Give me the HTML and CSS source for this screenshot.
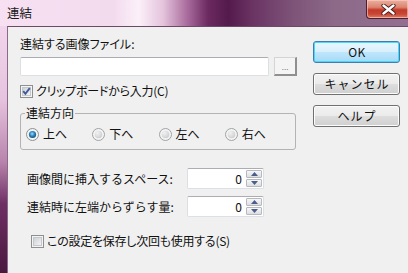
FILE: index.html
```html
<!DOCTYPE html>
<html lang="ja">
<head>
<meta charset="utf-8">
<title>連結</title>
<link rel="stylesheet" href="styles.css">
</head>
<body>
<div class="window">
  <div class="titlebar">
    <span class="title">連結</span>
    <div class="close">
      <svg width="15" height="11" viewBox="0 0 15 11"><path d="M2.5 1.5 L12.5 9.5 M12.5 1.5 L2.5 9.5" stroke="#4a1a1a" stroke-width="4.2" stroke-linecap="round"/><path d="M2.5 1.5 L12.5 9.5 M12.5 1.5 L2.5 9.5" stroke="#ffffff" stroke-width="2.4" stroke-linecap="round"/></svg>
    </div>
  </div>
  <div class="body">
    <div class="frame"></div>
    <div class="client">
      <div class="main">
        <div class="label">連結する画像ファイル:</div>
        <div class="file-row">
          <div class="input"></div>
          <div class="browse">...</div>
        </div>
        <div class="check">
          <svg class="box" width="13" height="13" viewBox="0 0 13 13">
            <defs><linearGradient id="cg" x1="0" y1="0" x2="1" y2="1"><stop offset="0" stop-color="#cbcfd5"/><stop offset="1" stop-color="#f6f6f6"/></linearGradient></defs>
            <rect x="0.5" y="0.5" width="12" height="12" fill="#f4f4f4" stroke="#8e8f8f"/>
            <rect x="2.5" y="2.5" width="8" height="8" fill="url(#cg)" stroke="#c4c7cc"/>
            <path d="M3.2 6.2 L5.4 8.8 L9.8 3.2" stroke="#3e5a98" stroke-width="1.9" fill="none"/>
          </svg>
          <span class="ptext">クリップボードから入力(C)</span>
        </div>
        <div class="group">
          <div class="legend">連結方向</div>
          <div class="radios">
            <div class="radio">
              <svg width="13" height="13" viewBox="0 0 13 13">
                <defs><radialGradient id="rs" cx="0.45" cy="0.4" r="0.6"><stop offset="0" stop-color="#9be0f8"/><stop offset="0.55" stop-color="#2a86c0"/><stop offset="1" stop-color="#16507e"/></radialGradient></defs>
                <circle cx="6.5" cy="6.5" r="6" fill="#f4f4f4" stroke="#8e8f8f"/>
                <circle cx="6.5" cy="6.5" r="3.6" fill="url(#rs)"/>
              </svg>
              <span>上へ</span>
            </div>
            <div class="radio">
              <svg width="13" height="13" viewBox="0 0 13 13">
                <defs><radialGradient id="ru" cx="0.35" cy="0.3" r="0.8"><stop offset="0" stop-color="#f2f2f2"/><stop offset="1" stop-color="#c9cbce"/></radialGradient></defs>
                <circle cx="6.5" cy="6.5" r="6" fill="#f4f4f4" stroke="#a0a2a5"/>
                <circle cx="6.5" cy="6.5" r="3.8" fill="url(#ru)"/>
              </svg>
              <span>下へ</span>
            </div>
            <div class="radio">
              <svg width="13" height="13" viewBox="0 0 13 13">
                <circle cx="6.5" cy="6.5" r="6" fill="#f4f4f4" stroke="#a0a2a5"/>
                <circle cx="6.5" cy="6.5" r="3.8" fill="url(#ru)"/>
              </svg>
              <span>左へ</span>
            </div>
            <div class="radio">
              <svg width="13" height="13" viewBox="0 0 13 13">
                <circle cx="6.5" cy="6.5" r="6" fill="#f4f4f4" stroke="#a0a2a5"/>
                <circle cx="6.5" cy="6.5" r="3.8" fill="url(#ru)"/>
              </svg>
              <span>右へ</span>
            </div>
          </div>
        </div>
        <div class="field first">
          <span class="flabel">画像間に挿入するスペース:</span>
          <div class="spin">
            <span class="value">0</span>
            <div class="arrows">
              <div class="arrow"><svg width="7" height="4" viewBox="0 0 7 4"><path d="M0 4 L3.5 0 L7 4 Z" fill="#4a5d8c"/></svg></div>
              <div class="arrow"><svg width="7" height="4" viewBox="0 0 7 4"><path d="M0 0 L3.5 4 L7 0 Z" fill="#4a5d8c"/></svg></div>
            </div>
          </div>
        </div>
        <div class="field">
          <span class="flabel">連結時に左端からずらす量:</span>
          <div class="spin">
            <span class="value">0</span>
            <div class="arrows">
              <div class="arrow"><svg width="7" height="4" viewBox="0 0 7 4"><path d="M0 4 L3.5 0 L7 4 Z" fill="#4a5d8c"/></svg></div>
              <div class="arrow"><svg width="7" height="4" viewBox="0 0 7 4"><path d="M0 0 L3.5 4 L7 0 Z" fill="#4a5d8c"/></svg></div>
            </div>
          </div>
        </div>
        <div class="check save">
          <svg class="box" width="13" height="13" viewBox="0 0 13 13">
            <rect x="0.5" y="0.5" width="12" height="12" fill="#f4f4f4" stroke="#8e8f8f"/>
            <rect x="2.5" y="2.5" width="8" height="8" fill="url(#cg)" stroke="#c4c7cc"/>
          </svg>
          <span class="ptext">この設定を保存し次回も使用する(S)</span>
        </div>
      </div>
      <div class="buttons">
        <div class="btn default">OK</div>
        <div class="btn">キャンセル</div>
        <div class="btn">ヘルプ</div>
      </div>
    </div>
  </div>
</div>
</body>
</html>
```

FILE: styles.css
```css
* { box-sizing: border-box; }
html, body {
  margin: 0;
  padding: 0;
  width: 408px;
  height: 273px;
  overflow: hidden;
}
body {
  font-family: "Noto Sans CJK JP", "Noto Sans", sans-serif;
  font-size: 12px;
  line-height: 14px;
  color: #111;
}
.window {
  width: 408px;
  height: 273px;
  display: flex;
  flex-direction: column;
}
.titlebar {
  height: 26px;
  flex: none;
  display: flex;
  justify-content: space-between;
  align-items: flex-start;
  padding-left: 7px;
  background: linear-gradient(90deg,
    #f6e0f2 0%, #f3dbee 28%, #fbf0f9 34%, #e4c3dc 40%,
    #a86a9c 46%, #6b2a60 51%, #541a4b 56%, #6a3463 62%,
    #7e5479 72%, #8c6a88 82%, #936f90 100%);
}
.title {
  margin-top: 6px;
  font-size: 12.5px;
  color: #1a1a1a;
}
.close {
  width: 42px;
  height: 19px;
  border: 1px solid #4a2030;
  border-top: none;
  border-right: none;
  border-radius: 0 0 0 4px;
  background: linear-gradient(180deg, #eab0a0 0%, #dc8470 40%, #c23a2a 55%, #c84634 78%, #de7c66 100%);
  box-shadow: inset 0 0 0 1px rgba(255, 210, 200, 0.6);
  display: flex;
  align-items: center;
  justify-content: center;
  padding-left: 2px;
}
.body {
  flex: 1;
  display: flex;
}
.frame {
  width: 7px;
  flex: none;
  background: linear-gradient(180deg, #f1d5ec 0%, #e6c2de 30%, #b884ad 55%, #6e3064 72%, #4a183f 100%);
}
.client {
  flex: 1;
  background: #f0f0f0;
  border-top: 1px solid #6a4a66;
  border-left: 1px solid #8a6a86;
  display: flex;
}
.main {
  width: 289px;
  padding: 10px 0 0 12px;
  display: flex;
  flex-direction: column;
}
.label {
  height: 14px;
  font-feature-settings: "palt";
}
.ptext {
  font-feature-settings: "palt";
  letter-spacing: -0.25px;
}
.file-row {
  margin-top: 6px;
  display: flex;
  gap: 5px;
  height: 19px;
}
.input {
  width: 250px;
  height: 19px;
  background: #fff;
  border: 1px solid #dbdfe6;
  border-top-color: #abadb3;
  border-radius: 2px;
}
.browse {
  width: 23px;
  height: 19px;
  border: 1px solid #d4d4d4;
  border-right: 2px solid #8f8f8f;
  border-bottom: 2px solid #8f8f8f;
  background: #f4f4f4;
  font-size: 8px;
  line-height: 8px;
  color: #777;
  display: flex;
  justify-content: center;
  align-items: flex-end;
  padding-bottom: 3px;
}
.check {
  display: flex;
  align-items: center;
  gap: 3px;
  height: 14px;
  margin-top: 8px;
}
.check .box { flex: none; }
.group {
  margin-top: 15px;
  width: 276px;
  border: 1px solid #b3b3b3;
  border-radius: 3px;
  padding: 0 4px 8px 4px;
}
.legend {
  width: fit-content;
  margin-top: -8px;
  padding: 0 1px;
  background: #f0f0f0;
  height: 14px;
}
.radios {
  display: flex;
  margin-top: 7px;
  padding-left: 1px;
}
.radio {
  width: 66.7px;
  display: flex;
  align-items: center;
  gap: 4px;
  height: 14px;
}
.radio svg { flex: none; }
.field {
  display: flex;
  align-items: center;
  height: 21px;
  margin-top: 7px;
  padding-left: 7px;
}
.field.first { margin-top: 18px; }
.flabel { width: 160px; }
.spin {
  width: 77px;
  height: 21px;
  background: #fff;
  border: 1px solid #dbdfe6;
  border-top-color: #abadb3;
  border-radius: 2px;
  display: flex;
  align-items: center;
  justify-content: flex-end;
  padding-right: 1px;
}
.value {
  margin-right: 4px;
}
.arrows {
  width: 16px;
  height: 17px;
  display: flex;
  flex-direction: column;
  gap: 1px;
}
.arrow {
  flex: 1;
  border: 1px solid #b6b9be;
  border-radius: 1px;
  background: linear-gradient(180deg, #f7f7f7, #dcdee1);
  display: flex;
  align-items: center;
  justify-content: center;
}
.check.save {
  margin-top: 17px;
  padding-left: 11px;
}
.buttons {
  padding: 14px 0 0 16px;
  display: flex;
  flex-direction: column;
  gap: 10px;
}
.btn {
  width: 87px;
  height: 22px;
  border: 1px solid #707070;
  border-radius: 3px;
  background: linear-gradient(180deg, #f2f2f2 0%, #ebebeb 48%, #dddddd 52%, #cfcfcf 100%);
  display: flex;
  align-items: center;
  justify-content: center;
  letter-spacing: 1px;
  padding-left: 1px;
  box-shadow: inset 0 0 0 1px #fcfcfc;
}
.btn.default {
  letter-spacing: 0.5px;
  border-color: #3c7fb1;
  background: linear-gradient(180deg, #eaf6fd 0%, #d9f0fc 48%, #bee6fd 52%, #a7d9f5 100%);
  box-shadow: inset 0 0 0 1px #48d8fb;
}
```
